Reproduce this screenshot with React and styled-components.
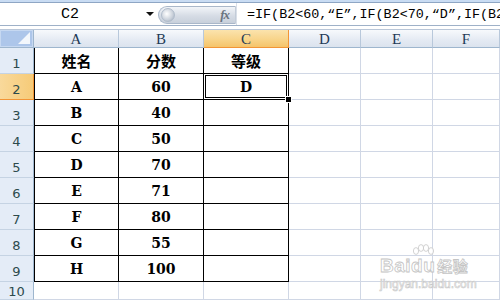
import React from 'react';
import styled, { createGlobalStyle, css } from 'styled-components';

const GlobalStyle = createGlobalStyle`
  html, body {
    margin: 0;
    padding: 0;
    background: #fff;
    overflow: hidden;
  }
  #root {
    width: 500px;
    height: 300px;
  }
`;

const columns = ['A', 'B', 'C', 'D', 'E', 'F'];
const rows = [
  ['姓名', '分数', '等级'],
  ['A', '60', 'D'],
  ['B', '40', ''],
  ['C', '50', ''],
  ['D', '70', ''],
  ['E', '71', ''],
  ['F', '80', ''],
  ['G', '55', ''],
  ['H', '100', ''],
];

const App = () => {
  return (
    <Wrapper>
      <GlobalStyle />
      <TopStrip />
      <FormulaBar>
        <NameBox>
          <span>C2</span>
          <Caret />
        </NameBox>
        <FxButton>
          <Knob />
          <Fx>fx</Fx>
        </FxButton>
        <FormulaInput>=IF(B2&lt;60,“E”,IF(B2&lt;70,“D”,IF(B2&lt;80,“C”,“B”)))</FormulaInput>
      </FormulaBar>
      <Gap />
      <Sheet>
        <Corner>
          <svg width='12' height='12' viewBox='0 0 12 12'>
            <polygon points='12,0 12,12 0,12' fill='#ffffff' opacity='0.85' />
          </svg>
        </Corner>
        {columns.map((col) => (
          <ColHeader key={col} active={col === 'C'}>
            {col}
          </ColHeader>
        ))}
        {Array.from({ length: 10 }).map((_, r) => {
          const data = rows[r];
          return (
            <React.Fragment key={r}>
              <RowHeader active={r === 1} short={r === 9}>
                {r + 1}
              </RowHeader>
              {columns.map((col, c) => {
                const boxed = !!data && c < 3;
                const selected = r === 1 && c === 2;
                return (
                  <Cell
                    key={col}
                    boxed={boxed}
                    first={boxed && c === 0}
                    cjk={r === 0}
                    selected={selected}
                  >
                    {boxed ? data[c] : ''}
                    {selected && <Handle />}
                  </Cell>
                );
              })}
            </React.Fragment>
          );
        })}
      </Sheet>
      <Watermark>
        <Paw viewBox='0 0 30 16' width='30' height='16'>
          <ellipse cx='8' cy='7' rx='2.6' ry='3.4' />
          <ellipse cx='13' cy='4' rx='2.6' ry='3.4' />
          <ellipse cx='18' cy='4' rx='2.6' ry='3.4' />
          <ellipse cx='23' cy='7' rx='2.6' ry='3.4' />
        </Paw>
        <MarkTop>
          Bai<span className='du'>du</span>
          <span className='cn'>经验</span>
        </MarkTop>
        <MarkBottom>jingyan.baidu.com</MarkBottom>
      </Watermark>
    </Wrapper>
  );
};

const Wrapper = styled.div`
  position: relative;
  width: 500px;
  height: 300px;
  overflow: hidden;
  display: flex;
  flex-direction: column;
  background: #fff;
`;

const TopStrip = styled.div`
  height: 2px;
  background: #c9dcf3;
  border-bottom: 1px solid #8ea6c4;
`;

const FormulaBar = styled.div`
  height: 22px;
  display: flex;
  align-items: stretch;
  background: #fff;
  border-bottom: 1px solid #9fb1c8;
`;

const NameBox = styled.div`
  width: 158px;
  display: flex;
  align-items: center;
  font-family: 'Liberation Mono', monospace;
  font-size: 15px;
  color: #000;
  span {
    width: 140px;
    text-align: center;
    padding-top: 1px;
  }
`;

const Caret = styled.i`
  width: 0;
  height: 0;
  border-left: 4px solid transparent;
  border-right: 4px solid transparent;
  border-top: 4px solid #111;
  margin-left: 6px;
`;

const FxButton = styled.div`
  width: 78px;
  margin: 3px 0 1px;
  border-radius: 9px 0 0 9px;
  background: linear-gradient(#f2f5f9, #d6dce5 55%, #c8d0db);
  border: 1px solid #a9b7c9;
  border-right: 1px solid #c3ccd8;
  display: flex;
  align-items: center;
  justify-content: space-between;
  padding: 0 6px 0 2px;
  box-sizing: border-box;
`;

const Knob = styled.i`
  width: 14px;
  height: 14px;
  border-radius: 50%;
  background: radial-gradient(circle at 40% 40%, #ffffff, #c9d0da 60%, #9aa6b6);
  border: 1px solid #b0bccb;
  box-sizing: border-box;
`;

const Fx = styled.span`
  font-family: 'Liberation Serif', serif;
  font-style: italic;
  font-weight: bold;
  font-size: 13px;
  color: #6a7480;
  letter-spacing: -1px;
`;

const FormulaInput = styled.div`
  flex: 1;
  display: flex;
  align-items: center;
  padding-left: 10px;
  white-space: nowrap;
  overflow: hidden;
  font-family: 'Liberation Mono', monospace;
  font-size: 13.4px;
  color: #000;
  border-left: 1px solid #d9dfe8;
`;

const Gap = styled.div`
  height: 3px;
  background: #fff;
  border-bottom: 1px solid #b9c6d8;
`;

const Sheet = styled.div`
  display: grid;
  grid-template-columns: 34px 85px 85px 85px 72px 72px 1fr;
  grid-template-rows: 18px repeat(9, 26px) 18px;
`;

const headerBg = css`
  background: linear-gradient(#f7f9fc, #e4eaf3 60%, #dbe3ee);
`;

const activeBg = css`
  background: linear-gradient(#fbe3ad, #f8d48a 55%, #f5c46a);
`;

const Corner = styled.div`
  background: #adc6ea;
  border-right: 1px solid #9eb6ce;
  border-bottom: 1px solid #9eb6ce;
  box-shadow: inset 0 0 0 1px #c6d8f1;
  display: flex;
  align-items: flex-end;
  justify-content: flex-end;
  padding: 0 3px 3px 0;
  box-sizing: border-box;
`;

const ColHeader = styled.div`
  ${(p) => (p.active ? activeBg : headerBg)};
  border-right: 1px solid ${(p) => (p.active ? '#f29536' : '#b8c8db')};
  border-bottom: 1px solid ${(p) => (p.active ? '#f29536' : '#9eb6ce')};
  display: flex;
  align-items: center;
  justify-content: center;
  padding-top: 1px;
  font-family: 'Liberation Serif', serif;
  font-size: 15px;
  color: #1e3a56;
  box-sizing: border-box;
`;

const RowHeader = styled.div`
  background: ${(p) => (p.active ? 'linear-gradient(90deg, #f9d99b, #f6cb78)' : '#e4ecf7')};
  border-right: 1px solid ${(p) => (p.active ? '#f29536' : '#9eb6ce')};
  border-bottom: 1px solid ${(p) => (p.active ? '#f29536' : '#c5d3e3')};
  display: flex;
  align-items: flex-end;
  justify-content: center;
  padding-bottom: ${(p) => (p.short ? '0' : '2px')};
  font-family: 'DejaVu Sans', sans-serif;
  font-size: 13px;
  color: #2c4a4c;
  box-sizing: border-box;
`;

const Cell = styled.div`
  position: relative;
  border-right: 1px solid ${(p) => (p.boxed ? '#000' : '#d0d7e5')};
  border-bottom: 1px solid ${(p) => (p.boxed ? '#000' : '#d0d7e5')};
  border-left: ${(p) => (p.first ? '1px solid #000' : '0')};
  display: flex;
  align-items: center;
  justify-content: center;
  font-family: ${(p) =>
    p.cjk ? "'Noto Sans CJK SC', sans-serif" : "'DejaVu Serif', serif"};
  font-size: ${(p) => (p.cjk ? '15px' : '14px')};
  font-weight: bold;
  color: #000;
  box-sizing: border-box;
  ${(p) =>
    p.selected &&
    css`
      box-shadow: inset 0 0 0 1px #fff, inset 0 0 0 2px #000;
    `}
`;

const Handle = styled.i`
  position: absolute;
  right: -4px;
  bottom: -4px;
  width: 5px;
  height: 5px;
  background: #000;
  border: 1px solid #fff;
  z-index: 2;
`;

const Watermark = styled.div`
  position: absolute;
  left: 380px;
  top: 244px;
  width: 100px;
  color: rgba(255, 255, 255, 0.9);
  pointer-events: none;
`;

const Paw = styled.svg`
  position: absolute;
  left: 28px;
  top: 0;
  fill: rgba(255, 255, 255, 0.8);
  stroke: #c8c8c8;
  stroke-width: 0.8;
`;

const MarkTop = styled.div`
  margin-top: 12px;
  font-family: 'Liberation Sans', sans-serif;
  font-size: 19px;
  font-weight: bold;
  letter-spacing: 0.5px;
  -webkit-text-stroke: 0.8px #c4c4c4;
  line-height: 20px;
  white-space: nowrap;
  .cn {
    font-family: 'Noto Sans CJK SC', sans-serif;
    font-size: 15px;
    margin-left: 2px;
  }
`;

const MarkBottom = styled.div`
  margin-top: 1px;
  font-family: 'Liberation Sans', sans-serif;
  font-size: 12px;
  color: rgba(255, 255, 255, 0.9);
  -webkit-text-stroke: 0.6px #c8c8c8;
  white-space: nowrap;
`;

export default App;
